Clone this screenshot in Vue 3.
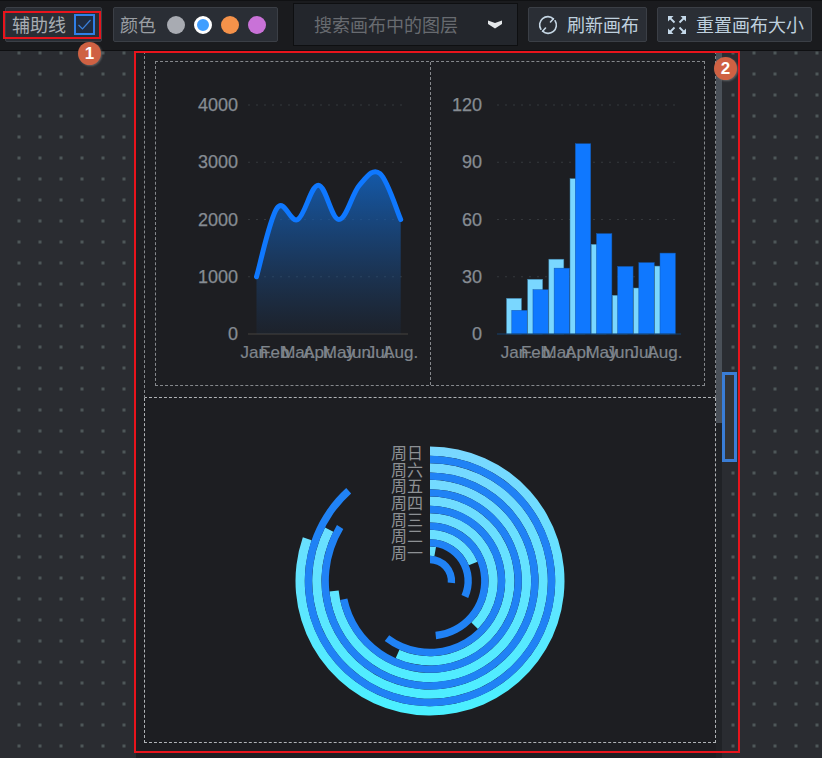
<script setup>
const cjk = '"Liberation Sans", "Noto Sans CJK SC", sans-serif'
const months = ['Jan.', 'Feb.', 'Mar.', 'Apr.', 'May', 'Jun.', 'Jul.', 'Aug.']
const colors = [
  { bg: '#a8abb2', cls: '' },
  { bg: '#409eff', cls: 'active' },
  { bg: '#f5924a', cls: '' },
  { bg: '#c972d8', cls: '' }
]

/* Area chart — drawn in cell coordinates (cell origin at 156,62) */
const ox = 156
const oy = 62
const areaTicks = [4000, 3000, 2000, 1000, 0]
const yArea = v => 334 - oy - (v / 4000) * 229
const areaVals = [1000, 2200, 2000, 2600, 2000, 2600, 2800, 2000]
const xArea = i => 256.5 - ox + i * 20.6
function smooth(pts) {
  let d = `M${pts[0][0]},${pts[0][1]}`
  const t = 0.18
  for (let i = 0; i < pts.length - 1; i++) {
    const p0 = pts[Math.max(0, i - 1)]
    const p1 = pts[i]
    const p2 = pts[i + 1]
    const p3 = pts[Math.min(pts.length - 1, i + 2)]
    d += ` C${(p1[0] + (p2[0] - p0[0]) * t).toFixed(1)},${(p1[1] + (p2[1] - p0[1]) * t).toFixed(1)} ${(p2[0] - (p3[0] - p1[0]) * t).toFixed(1)},${(p2[1] - (p3[1] - p1[1]) * t).toFixed(1)} ${p2[0]},${p2[1]}`
  }
  return d
}
const areaPts = areaVals.map((v, i) => [xArea(i), yArea(v)])
const linePath = smooth(areaPts)
const fillPath = `${linePath} L${xArea(7)},${yArea(0)} L${xArea(0)},${yArea(0)} Z`

/* Bar chart — cell origin at 431,62 */
const bx = 431
const barTicks = [120, 90, 60, 30, 0]
const yBar = v => 334 - oy - (v / 120) * 229
const s1 = [18.7, 28.7, 39.2, 81.4, 47, 20.3, 24.1, 35.6]
const s2 = [12.4, 23.2, 34.5, 99.7, 52.6, 35.4, 37.4, 42.4]
const barCenter = i => 516.8 - bx + i * 21.17

/* Radial chart — cell origin at 145,398; centre 430,581 */
const cx = 430 - 145
const cy = 581 - 398
const days = ['周一', '周二', '周三', '周四', '周五', '周六', '周日']
const ang1 = [10, 68, 135, 204, 264, 297, 289]
const ang2 = [95, 114, 174, 217, 258, 301, 318]
function arc(r0, r1, deg) {
  const a = (deg * Math.PI) / 180
  const pt = r => [cx + r * Math.sin(a), cy - r * Math.cos(a)].map(n => n.toFixed(2)).join(',')
  const large = deg > 180 ? 1 : 0
  return `M${cx},${cy - r1} A${r1},${r1} 0 ${large} 1 ${pt(r1)} L${pt(r0)} A${r0},${r0} 0 ${large} 0 ${cx},${cy - r0} Z`
}
const rings = days.map((label, i) => {
  const outer = 134.5 - (6 - i) * 16.67
  return {
    label,
    light: arc(outer - 9.3, outer, ang1[i]),
    dark: arc(outer - 16.67, outer - 9.3, ang2[i]),
    y: 453 - 398 + (6 - i) * 16.67
  }
})
</script>

<template>
  <div class="page" :style="{ fontFamily: cjk }">
    <header class="toolbar">
      <div class="tool guide">
        <span class="label">辅助线</span>
        <span class="check">
          <svg width="15" height="13" viewBox="0 0 15 13"><path d="M1.5 7 L5.5 11 L13.5 2" fill="none" stroke="#3a7fdc" stroke-width="1.2" /></svg>
        </span>
      </div>
      <div class="tool palette">
        <span class="label muted">颜色</span>
        <span class="dots">
          <i v-for="c in colors" :key="c.bg" class="dot" :class="c.cls" :style="{ background: c.bg }"></i>
        </span>
      </div>
      <div class="search">
        <span class="label">搜索画布中的图层</span>
        <svg width="16" height="9" viewBox="0 0 16 9"><path d="M1 0.5 L8 3 L15 0.5 L15 4 L8 8.5 L1 4 Z" fill="#e4e7ea" /></svg>
      </div>
      <button class="tool btn">
        <svg width="20" height="20" viewBox="0 0 20 20" fill="none" stroke="#c5d6e4" stroke-width="1.6" stroke-linecap="round">
          <path d="M2.9 14.2 A8.2 8.2 0 0 1 15.4 3.8" />
          <path d="M15.4 3.8 L12.5 7" />
          <path d="M17.1 5.8 A8.2 8.2 0 0 1 4.6 16.2" />
          <path d="M4.6 16.2 L7.5 13" />
        </svg>
        <span class="label">刷新画布</span>
      </button>
      <button class="tool btn wide">
        <svg width="20" height="20" viewBox="0 0 20 20" fill="#c5d9ea" stroke="#c5d9ea" stroke-width="1.8">
          <path d="M1 1h5.5L1 6.5z" stroke="none" />
          <path d="M19 1h-5.5L19 6.5z" stroke="none" />
          <path d="M1 19h5.5L1 13.5z" stroke="none" />
          <path d="M19 19h-5.5L19 13.5z" stroke="none" />
          <path d="M2.5 2.5 L7.5 7.5 M17.5 2.5 L12.5 7.5 M2.5 17.5 L7.5 12.5 M17.5 17.5 L12.5 12.5" fill="none" />
        </svg>
        <span class="label">重置画布大小</span>
      </button>
    </header>

    <main class="canvas">
      <section class="panel">
        <div class="content">
          <div class="upper">
            <div class="charts">
              <div class="cell">
                <svg width="274" height="322" class="chart">
                  <defs>
                    <linearGradient id="areaFill" x1="0" y1="0" x2="0" y2="1">
                      <stop offset="0" stop-color="#1360b8" stop-opacity="0.9" />
                      <stop offset="1" stop-color="#1a4f92" stop-opacity="0.08" />
                    </linearGradient>
                  </defs>
                  <g v-for="t in areaTicks" :key="t">
                    <line v-if="t" x1="92" x2="250" :y1="yArea(t)" :y2="yArea(t)" class="grid" />
                    <text x="82" :y="yArea(t) + 6" text-anchor="end" class="tick">{{ t }}</text>
                  </g>
                  <line x1="92" x2="252" :y1="yArea(0)" :y2="yArea(0)" class="axis" />
                  <path :d="fillPath" fill="url(#areaFill)" />
                  <path :d="linePath" fill="none" stroke="#0f78ff" stroke-width="5" stroke-linecap="round" />
                  <text v-for="(m, i) in months" :key="m" :x="xArea(i)" y="296" text-anchor="middle" class="month">{{ m }}</text>
                </svg>
              </div>
              <div class="cell last">
                <svg width="273" height="322" class="chart">
                  <g v-for="t in barTicks" :key="t">
                    <line v-if="t" x1="66" x2="250" :y1="yBar(t)" :y2="yBar(t)" class="grid" />
                    <text x="51" :y="yBar(t) + 6" text-anchor="end" class="tick">{{ t }}</text>
                  </g>
                  <g v-for="(v, i) in months" :key="v">
                    <rect :x="barCenter(i) - 10.3" :y="yBar(s1[i])" width="15" :height="yBar(0) - yBar(s1[i])" fill="#7ad7ff" stroke="#3c7fa8" stroke-width="0.5" />
                    <rect :x="barCenter(i) - 5" :y="yBar(s2[i])" width="15.4" :height="yBar(0) - yBar(s2[i])" fill="#0f78ff" stroke="#1259ad" stroke-width="0.5" />
                  </g>
                  <line x1="66" x2="250" :y1="yBar(0)" :y2="yBar(0)" stroke="#14406f" stroke-width="1" />
                  <text v-for="(m, i) in months" :key="m" :x="barCenter(i)" y="296" text-anchor="middle" class="month">{{ m }}</text>
                </svg>
              </div>
            </div>
          </div>
          <div class="lower">
            <svg width="570" height="343" class="chart">
              <defs>
                <linearGradient id="ringFill" gradientUnits="userSpaceOnUse" x1="0" y1="48" x2="0" y2="318">
                  <stop offset="0" stop-color="#7ad7ff" />
                  <stop offset="1" stop-color="#4af0ff" />
                </linearGradient>
              </defs>
              <g v-for="r in rings" :key="r.label">
                <path :d="r.light" fill="url(#ringFill)" />
                <path :d="r.dark" fill="#2082f5" />
                <text :x="cx - 7" :y="r.y + 6" text-anchor="end" class="day">{{ r.label }}</text>
              </g>
            </svg>
          </div>
        </div>
        <div class="track"></div>
      </section>

      <div class="frame frame-stage"></div>
      <div class="thumb"></div>
      <span class="badge badge-two">2</span>
    </main>

    <div class="frame frame-guide"></div>
    <span class="badge badge-one">1</span>
  </div>
</template>

<style scoped>
.page {
  position: relative;
  width: 822px;
  height: 758px;
  overflow: hidden;
  display: flex;
  flex-direction: column;
  background: #18191b;
}
.toolbar {
  height: 51px;
  flex: none;
  box-sizing: border-box;
  display: flex;
  align-items: center;
  padding: 0 10px 2px 5px;
  background: #1a1b1e;
  border-top: 1px solid #101113;
  border-bottom: 1px solid #0f1012;
  font-size: 18px;
}
.label {
  margin-bottom: 2px;
}
.tool {
  height: 35px;
  box-sizing: border-box;
  display: flex;
  align-items: center;
  background: #2a2e35;
  border: 1px solid #3b3f46;
  border-radius: 2px;
  color: #a8adb3;
  font: inherit;
  padding: 0;
}
.guide {
  width: 97px;
  padding-left: 6px;
  gap: 8px;
}
.check {
  width: 21px;
  height: 21px;
  box-sizing: border-box;
  display: flex;
  align-items: center;
  justify-content: center;
  background: #1f2c42;
  border: 2px solid #2f7fe8;
}
.palette {
  width: 165px;
  margin-left: 11px;
  padding-left: 6px;
  gap: 11px;
}
.muted {
  color: #9a9ea3;
}
.dots {
  display: flex;
  gap: 9px;
}
.dot {
  display: block;
  width: 18px;
  height: 18px;
  border-radius: 50%;
  box-sizing: border-box;
}
.dot.active {
  border: 3px solid #ffffff;
}
.search {
  width: 225px;
  height: 43px;
  box-sizing: border-box;
  margin-left: 15px;
  margin-right: 10px;
  display: flex;
  align-items: center;
  justify-content: space-between;
  padding: 0 14px 0 20px;
  background: #23262c;
  border: 1px solid #0e0f11;
  color: #686b70;
}
.btn {
  width: 119px;
  gap: 9px;
  padding-left: 9px;
  color: #bfd0de;
}
.btn svg {
  flex: none;
}
.wide {
  width: 155px;
  margin-left: 10px;
  gap: 9px;
}
.canvas {
  position: relative;
  flex: 1;
  min-height: 0;
  background-color: #2a2c31;
  background-image: radial-gradient(circle at center, #4e5759 0, #4e5759 1.5px, transparent 2px);
  background-size: 21px 21px;
  background-position: 8.5px -8.5px;
}
.panel {
  width: 586px;
  height: 100%;
  margin-left: 136px;
  display: flex;
  background: #202226;
}
.content {
  width: 580px;
  box-sizing: border-box;
  padding-left: 8px;
  background: #1d1e22;
}
.upper {
  height: 347px;
  box-sizing: border-box;
  padding: 10px 0 0 10px;
  border-left: 1px dashed #85888c;
  border-right: 1px dashed #85888c;
  border-bottom: 1px dashed #b0b3b6;
}
.charts {
  display: flex;
  width: 550px;
  height: 325px;
  box-sizing: border-box;
  border: 1px dashed #85888c;
}
.cell {
  width: 275px;
  height: 323px;
  border-right: 1px dashed #85888c;
  box-sizing: border-box;
}
.cell.last {
  border-right: 0;
}
.chart {
  display: block;
}
.lower {
  width: 572px;
  height: 345px;
  box-sizing: border-box;
  border-left: 1px dashed #b0b3b6;
  border-right: 1px dashed #b0b3b6;
  border-bottom: 1px dashed #b0b3b6;
}
.grid {
  stroke: #35383c;
  stroke-width: 1;
  stroke-dasharray: 2 6;
}
.axis {
  stroke: #46423e;
  stroke-width: 1;
}
.tick {
  fill: #868c93;
  stroke: #868c93;
  stroke-width: 0.25;
  font-size: 18px;
}
.month {
  fill: #7f858c;
  stroke: #7f858c;
  stroke-width: 0.2;
  font-size: 17px;
}
.day {
  fill: #8d9094;
  font-size: 16px;
}
.track {
  width: 6px;
  height: 372px;
  background: #4a5058;
}
.frame {
  position: absolute;
  box-sizing: border-box;
  border: 2px solid #e8141c;
  pointer-events: none;
}
.frame-stage {
  left: 134px;
  top: 0;
  width: 606px;
  height: 702px;
}
.frame-guide {
  left: 3px;
  top: 11px;
  width: 98px;
  height: 28px;
}
.thumb {
  position: absolute;
  left: 722px;
  top: 321px;
  width: 15px;
  height: 90px;
  box-sizing: border-box;
  border: 3px solid #3a7dd6;
  background: #333436;
}
.badge {
  position: absolute;
  width: 23px;
  height: 23px;
  border-radius: 50%;
  display: flex;
  align-items: center;
  justify-content: center;
  background: #cf6143;
  box-shadow: 1px 1px 2px rgba(120, 120, 120, 0.7);
  color: #ffffff;
  font-size: 17px;
  font-weight: 700;
}
.badge-one {
  left: 78px;
  top: 42px;
}
.badge-two {
  left: 714px;
  top: 6px;
}
</style>
